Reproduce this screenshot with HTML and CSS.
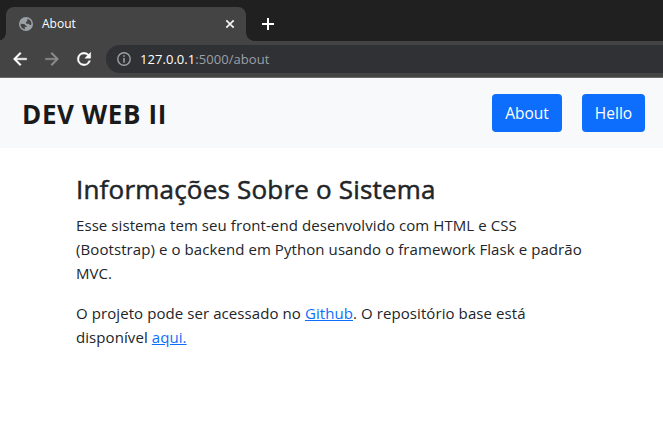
FILE: index.html
```html
<!DOCTYPE html>
<html lang="pt-br">
<head>
<meta charset="utf-8">
<title>About</title>
<link rel="stylesheet" href="styles.css">
</head>
<body>
<header class="browser">
  <div class="tabs">
    <div class="tab">
      <svg class="globe" viewBox="0 0 14 14"><circle cx="7" cy="7" r="7" fill="#9aa0a6"/><path d="M1.600 6.800l2.900.1c1.200 0 1.700.7 1.700 1.500h1.300v1.700H5.800v2.300A5.500 5.500 0 0 1 1.600 6.800zM8.700 1.800A5.500 5.500 0 0 1 12.400 7.600c-.6.500-1.500.4-2.100-.2-.4-.5-1-.6-1.700-.6-1.300 0-1.900-.7-1.700-1.600.1-.6.700-.8 1.300-.8V3.200z" fill="#444"/></svg>
      <span class="tab-title">About</span>
      <svg class="close" viewBox="0 0 10 10"><path d="M1.300 1.300l7.400 7.400M8.700 1.300L1.300 8.700" stroke="#f1f3f4" stroke-width="1.700"/></svg>
    </div>
    <svg class="plus" viewBox="0 0 12 12"><path d="M6 0v12M0 6h12" stroke="#fff" stroke-width="2"/></svg>
  </div>
  <div class="toolbar">
    <svg class="nav-icon" viewBox="0 0 24 24"><path fill="#fff" stroke="#fff" stroke-width=".5" d="M20 11H7.830l5.590-5.590L12 4l-8 8 8 8 1.410-1.410L7.830 13H20z"/></svg>
    <svg class="nav-icon" viewBox="0 0 24 24"><path fill="#8f8f8f" stroke="#8f8f8f" stroke-width=".4" d="M12 4l-1.410 1.410L16.170 11H4v2h12.170l-5.580 5.590L12 20l8-8z"/></svg>
    <svg class="nav-icon" viewBox="0 0 24 24"><path fill="#fff" stroke="#fff" stroke-width=".5" d="M17.650 6.350A7.960 7.960 0 0 0 12 4a8 8 0 1 0 7.730 10h-2.080A6 6 0 1 1 12 6c1.660 0 3.140.69 4.220 1.780L13 11h7V4z"/></svg>
    <div class="address">
      <svg class="info" viewBox="0 0 14 14"><circle cx="7" cy="7" r="6.200" fill="none" stroke="#9aa0a6" stroke-width="1.400"/><path d="M7 3.200v1.500M7 6v4.700" stroke="#9aa0a6" stroke-width="1.600"/></svg>
      <span class="url"><span class="host">127.0.0.1</span>:5000/about</span>
    </div>
  </div>
</header>
<nav class="navbar">
  <h1 class="brand">DEV WEB II</h1>
  <div class="actions">
    <a class="btn">About</a>
    <a class="btn btn-hello">Hello</a>
  </div>
</nav>
<main class="content">
  <h2>Informações Sobre o Sistema</h2>
  <p>Esse sistema tem seu front-end desenvolvido com HTML e CSS<br>(Bootstrap) e o backend em Python usando o framework Flask e padrão<br>MVC.</p>
  <p>O projeto pode ser acessado no <a class="link">Github</a>. O repositório base está<br>disponível <a class="link">aqui.</a></p>
</main>
</body>
</html>
```

FILE: styles.css
```css
* { box-sizing: border-box; }
body { margin: 0; background: #fff; color: #212529; font-family: "Open Sans", "Noto Sans", sans-serif; overflow: hidden; }
svg { display: block; flex: none; }

.browser { height: 78px; background: #444; border-bottom: 1px solid #6a6a6a; }
.tabs { height: 41px; display: flex; align-items: flex-end; background: #202020; padding-left: 6px; }
.tab { position: relative; width: 240px; height: 34px; display: flex; align-items: center; padding: 0 11px 0 13px; background: #444; border-radius: 8px 8px 0 0; }
.tab::before, .tab::after { content: ""; position: absolute; bottom: 0; width: 8px; height: 8px; }
.tab::before { left: -8px; background: radial-gradient(circle at 0 0, #202020 7.5px, #444 8px); }
.tab::after { right: -8px; background: radial-gradient(circle at 100% 0, #202020 7.5px, #444 8px); }
.globe { width: 14px; height: 14px; }
.tab-title { margin-left: 9px; flex: 1; font-size: 12px; line-height: 16px; color: #fff; }
.close { width: 10px; height: 10px; }
.plus { width: 12px; height: 12px; margin: 0 0 11px 16px; }
.toolbar { height: 36px; display: flex; align-items: center; padding-left: 10px; }
.nav-icon { width: 20px; height: 20px; margin-right: 12px; }
.address { flex: 1; height: 28px; display: flex; align-items: center; margin-right: -20px; padding-left: 11px; background: #303134; border-radius: 14px; }
.info { width: 14px; height: 14px; }
.url { margin-left: 9px; font-size: 13px; line-height: 18px; letter-spacing: .05px; color: #9aa0a6; white-space: nowrap; }
.host { color: #fff; }

.navbar { height: 70px; display: flex; align-items: center; justify-content: space-between; padding: 0 18px 0 22px; background: #f8f9fa; }
.brand { margin: 0; padding-top: 2px; font-size: 26px; font-weight: 700; line-height: 36px; letter-spacing: .65px; color: #1a1a1a; white-space: nowrap; }
.actions { display: flex; gap: 20px; }
.btn { width: 70px; height: 38px; border-radius: 4px; background: #0d6efd; color: #fff; font-size: 15.5px; line-height: 38px; text-align: center; }
.btn-hello { width: 63px; }

.content { padding: 24px 0 0 76px; white-space: nowrap; }
h2 { margin: 0 0 7px; font-size: 26px; font-weight: 400; line-height: 34px; letter-spacing: .2px; -webkit-text-stroke: .5px #212529; }
p { margin: 0 0 16px; font-size: 15px; line-height: 24px; letter-spacing: .08px; }
.link { color: #0d6efd; text-decoration: underline; }
```
